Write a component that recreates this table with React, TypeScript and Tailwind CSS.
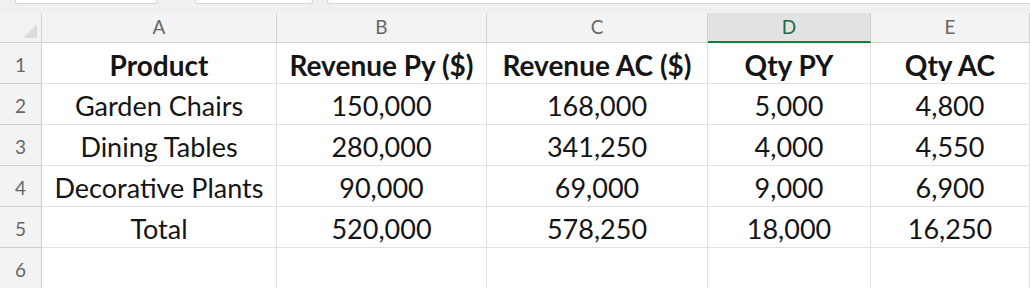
const cols = ["A", "B", "C", "D", "E"];

const rows: string[][] = [
  ["Product", "Revenue Py ($)", "Revenue AC ($)", "Qty PY", "Qty AC"],
  ["Garden Chairs", "150,000", "168,000", "5,000", "4,800"],
  ["Dining Tables", "280,000", "341,250", "4,000", "4,550"],
  ["Decorative Plants", "90,000", "69,000", "9,000", "6,900"],
  ["Total", "520,000", "578,250", "18,000", "16,250"],
  ["", "", "", "", ""],
];

export default function App() {
  return (
    <main
      className="w-[1030px] h-[288px] overflow-hidden bg-white"
      style={{ fontFamily: "Lato, 'Open Sans', sans-serif" }}
    >
      {/* formula bar remnants */}
      <div className="h-[13px] bg-[#f0f0f0] flex items-start">
        <div className="ml-[15px] w-[142px] h-[4px] bg-white border-b border-x border-[#d6d6d6] rounded-b-[3px]" />
        <div className="ml-[38px] w-[118px] h-[4px] bg-white border-b border-x border-[#d6d6d6] rounded-b-[3px]" />
        <div className="ml-[14px] flex-1 h-[4px] bg-white border-b border-l border-[#d6d6d6] rounded-bl-[3px]" />
      </div>

      <div className="grid grid-cols-[42px_235px_210px_221px_163px_1fr] grid-rows-[30px_repeat(6,41px)]">
        {/* corner */}
        <div className="relative bg-[#f3f3f3] border-r border-b border-[#d0d0d0]">
          <div className="absolute right-[4px] bottom-[4px] w-0 h-0 border-l-[14px] border-l-transparent border-b-[14px] border-b-[#dcdcdc]" />
        </div>
        {cols.map((c) =>
          c === "D" ? (
            <div
              key={c}
              className="flex items-center justify-center bg-[#e2e2e2] border-r border-[#d0d0d0] border-b-2 border-b-[#107c41] text-[19px] text-[#1e6e45]"
            >
              {c}
            </div>
          ) : (
            <div
              key={c}
              className="flex items-center justify-center bg-[#f3f3f3] border-r border-b border-[#d0d0d0] text-[19px] text-[#666666]"
            >
              {c}
            </div>
          )
        )}

        {rows.map((r, i) => (
          <>
            <div
              key={`h${i}`}
              className="flex items-center justify-center bg-[#f3f3f3] border-r border-b border-[#d0d0d0] text-[19px] text-[#666666] pt-[5px]"
            >
              {i + 1}
            </div>
            {r.map((v, j) => (
              <div
                key={`c${i}-${j}`}
                className={`flex items-center justify-center border-r border-b border-[#e1e1e1] text-[#151515] whitespace-nowrap pt-[4px] ${
                  i === 0 ? "font-bold text-[28px]" : "text-[27px]"
                }`}
              >
                {v}
              </div>
            ))}
          </>
        ))}
      </div>
    </main>
  );
}
